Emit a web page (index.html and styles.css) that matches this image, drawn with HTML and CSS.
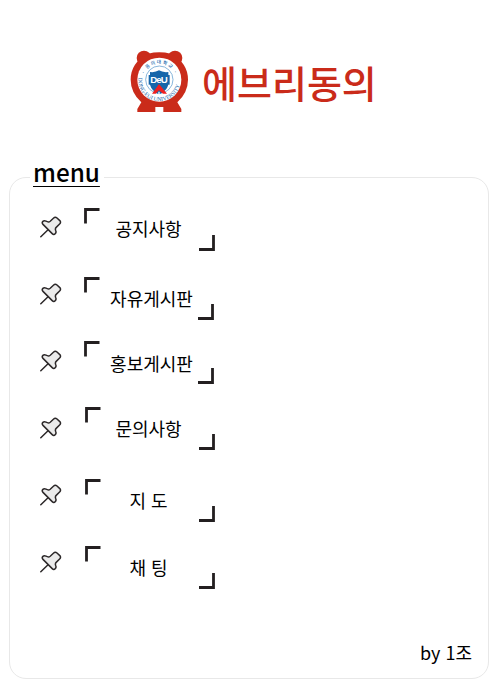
FILE: index.html
```
<!DOCTYPE html>
<html lang="ko">
<head>
<meta charset="utf-8">
<title>에브리동의</title>
<link rel="stylesheet" href="styles.css">
</head>
<body>
<svg class="defs" width="0" height="0" aria-hidden="true">
  <symbol id="pin" viewBox="0 0 22 22">
    <path d="M.8 20.8 7.8 14" fill="none" stroke="#2c2829" stroke-width="1.5" stroke-linecap="round"/>
    <path d="M10.2 5.2 13.4 2.2Q15.2 .5 17 2L19.8 4.6Q21.3 6.3 19.6 8L16.2 11.4Q15 12.6 15.6 14.2Q16.6 16.4 15.2 17.8Q13.8 19.2 12.2 17.6L3 8.4Q1.5 6.8 2.9 5.4Q4.2 4.2 6 5.2Q8.6 6.6 10.2 5.2Z" fill="#ebebeb" stroke="#2c2829" stroke-width="1.5" stroke-linejoin="round"/>
  </symbol>
  <symbol id="frame" viewBox="0 0 131 43">
    <path d="M1.5 15.5V1.5H15.5M129.5 27V41.5H115" fill="none" stroke="#231f20" stroke-width="2.8"/>
  </symbol>
  <symbol id="frame-narrow" viewBox="0 0 130 43">
    <path d="M1.5 15.5V1.5H15.5M128.5 27V41.5H114" fill="none" stroke="#231f20" stroke-width="2.8"/>
  </symbol>
</svg>
<header class="brand">
  <svg class="logo" viewBox="0 0 240 240">
    <g fill="#ca2b1a">
      <circle cx="72" cy="54" r="22"/>
      <circle cx="165" cy="54" r="22"/>
      <path d="M84 41Q118 33 152 41Q204 68 204 119Q204 157 172 187L184 207V216H130V201H106V216H52V207L64 187Q32 157 32 119Q32 68 84 41Z"/>
    </g>
    <circle cx="118" cy="119" r="66" fill="#fff"/>
    <circle cx="118" cy="119" r="41" fill="#fff" stroke="#4c91c9" stroke-width="2"/>
    <path id="upper" d="M70 119A48 48 0 0 1 166 119" fill="none"/>
    <path id="lower" d="M56 109A63 63 0 1 0 180 109" fill="none"/>
    <text class="seal-ko"><textPath href="#upper" startOffset="18">· 동의대학교 ·</textPath></text>
    <text class="seal-en"><textPath href="#lower" startOffset="4">DONG-EUI UNIVERSITY</textPath></text>
    <path d="M90 96Q106 98 117 91Q128 98 145 96V134Q140 153 117 163Q95 153 90 134Z" fill="#1666aa"/>
    <path d="M86 105H149V134H86Z" fill="#1666aa"/>
    <text class="seal-mark" x="117" y="130" text-anchor="middle" textLength="53">DeU</text>
    <path d="M117 132 96 161H107L117 151 129 161H141Z" fill="#ef2020"/>
    <path d="M117 155V164" stroke="#fff" stroke-width="4"/>
  </svg>
  <h1 class="title">에브리동의</h1>
</header>
<fieldset class="menu">
  <legend class="legend">menu</legend>
  <div class="columns">
    <div class="pins">
      <svg><use href="#pin"/></svg>
      <svg><use href="#pin"/></svg>
      <svg><use href="#pin"/></svg>
      <svg><use href="#pin"/></svg>
      <svg><use href="#pin"/></svg>
      <svg><use href="#pin"/></svg>
    </div>
    <nav class="links">
      <a class="link notice"><svg><use href="#frame"/></svg><span>공지사항</span></a>
      <a class="link narrow free"><svg><use href="#frame-narrow"/></svg><span>자유게시판</span></a>
      <a class="link narrow promo"><svg><use href="#frame-narrow"/></svg><span>홍보게시판</span></a>
      <a class="link shifted ask"><svg><use href="#frame-narrow"/></svg><span>문의사항</span></a>
      <a class="link shifted map"><svg><use href="#frame-narrow"/></svg><span>지 도</span></a>
      <a class="link shifted chat"><svg><use href="#frame-narrow"/></svg><span>채 팅</span></a>
    </nav>
  </div>
  <p class="credit">by 1조</p>
</fieldset>
</body>
</html>
```
FILE: styles.css
```
* { box-sizing: border-box; }
body {
  margin: 0;
  height: 700px;
  overflow: hidden;
  background: #fff;
  color: #000;
  font-family: "Noto Sans CJK KR", sans-serif;
}
.defs { display: block; }
.brand {
  display: flex;
  align-items: center;
  height: 160px;
  padding-left: 120px;
}
.logo { width: 80px; height: 80px; flex: none; }
.seal-ko { font-size: 14px; font-weight: 500; letter-spacing: 4px; fill: #1666aa; }
.seal-en { font-family: "Liberation Serif", serif; font-size: 17px; fill: #1666aa; }
.seal-mark { font-family: "Liberation Sans", sans-serif; font-size: 29px; font-weight: 700; fill: #fff; }
.title {
  margin: 3px 0 0 2px;
  font-size: 38px;
  line-height: 50px;
  font-weight: 500;
  color: #ca2b1a;
  white-space: nowrap;
}
.menu {
  width: 480px;
  height: 520px;
  margin: -1px 0 0 9px;
  padding: 0;
  border: 1px solid #e8e8e8;
  border-radius: 17px;
}
.legend {
  height: 36px;
  margin-left: 20px;
  padding: 0 4px 0 3px;
  font-size: 24.3px;
  line-height: 26px;
  font-weight: 500;
  text-decoration: underline;
  text-decoration-thickness: 1px;
  text-underline-offset: 4px;
}
.columns {
  display: flex;
  height: 430px;
  padding-left: 30px;
}
.pins {
  display: flex;
  flex-direction: column;
  gap: 45px;
  width: 44px;
  padding-top: 21px;
}
.pins svg { width: 22px; height: 22px; flex: none; }
.links { width: 131px; padding-top: 13px; }
.link {
  display: grid;
  width: 131px;
  height: 43px;
  font-size: 18px;
  line-height: 26px;
}
.link svg { grid-area: 1 / 1; width: 131px; height: 43px; }
.link span { grid-area: 1 / 1; padding: 8px 2px 0 0; text-align: center; white-space: nowrap; }
.narrow svg, .shifted svg { width: 130px; }
.shifted svg { margin-left: 1px; }
.notice span { padding-top: 7px; }
.free { margin-top: 26px; }
.free span { padding: 8px 0 0 4px; }
.promo { margin-top: 21px; }
.promo span { padding: 9px 0 0 4px; }
.ask { margin-top: 23px; }
.map { margin-top: 29px; }
.chat { margin-top: 24px; }
.credit {
  margin: 14px 16px 0 0;
  font-size: 18px;
  line-height: 26px;
  text-align: right;
}
```
